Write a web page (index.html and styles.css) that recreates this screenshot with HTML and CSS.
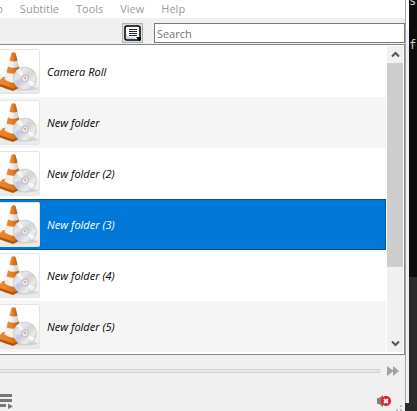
FILE: index.html
```html
<!DOCTYPE html>
<html lang="en">
<head>
<meta charset="utf-8">
<title>Playlist</title>
<link rel="stylesheet" href="styles.css">
</head>
<body>
<svg class="defs" aria-hidden="true">
  <defs>
    <linearGradient id="paper" x2="0" y2="1"><stop offset="0.4" stop-color="#fff"/><stop offset="1" stop-color="#e8e8e8"/></linearGradient>
    <linearGradient id="orange" x2="1" y2="0"><stop offset="0" stop-color="#e98a3a"/><stop offset="0.4" stop-color="#e8801f"/><stop offset="1" stop-color="#b4560e"/></linearGradient>
    <linearGradient id="white" x2="1" y2="0"><stop offset="0" stop-color="#ececec"/><stop offset="0.4" stop-color="#f4f4f4"/><stop offset="1" stop-color="#b4b4b4"/></linearGradient>
    <linearGradient id="disc" x2="1" y2="1"><stop offset="0" stop-color="#bfc1ca"/><stop offset="0.3" stop-color="#e6e8e8"/><stop offset="0.5" stop-color="#cfcee0"/><stop offset="0.7" stop-color="#ecece8"/><stop offset="1" stop-color="#b4b8bc"/></linearGradient>
    <symbol id="cover" viewBox="0 0 45 45">
      <rect x="0.5" y="0.5" width="44" height="44" rx="1" fill="url(#paper)" stroke="#e4e4e4"/>
      <ellipse cx="26" cy="39.500" rx="17" ry="2" fill="#d4d4d4"/>
      <path d="M8 28 27 27 31 34 18 41 2 34Z" fill="url(#orange)"/>
      <path d="M2 34 18 39.500 31 33 31 35 18 42 2 36.500Z" fill="#b4520b"/>
      <path d="M16.500 4Q18.500 2.500 20.500 4L27 31Q18 37 9.500 30Z" fill="url(#white)"/>
      <path d="M16.500 4Q18.500 2.500 20.500 4L22.500 11.500Q18.500 13.500 14.500 11.500Z" fill="url(#orange)"/>
      <path d="M13 17.500Q18.500 20 24 17.500L25.500 23.500Q18.500 26 11.500 23.500Z" fill="url(#orange)"/>
      <circle cx="30" cy="29.500" r="11.500" fill="url(#disc)" stroke="#c0c0c0" stroke-width=".6"/>
      <path d="M30 29.500 21 22 25 19ZM30 29.500 40 34 37 38Z" fill="#fff" opacity=".7"/>
      <path d="M30 29.500 37 21 40 26Z" fill="#e6ddb2" opacity=".6"/>
      <path d="M30 29.500 22 36 20 31Z" fill="#bfc2e6" opacity=".6"/>
      <circle cx="30" cy="29.500" r="4" fill="#c0c6dc"/>
      <circle cx="30" cy="29.500" r="2.500" fill="#f3eee8"/>
      <path d="M28 28 31 28 31 31Z" fill="#e9a45c"/>
    </symbol>
  </defs>
</svg>
<div class="desktop">
  <main class="player">
    <nav class="menu">
      <button class="menu-item" type="button">Video</button>
      <button class="menu-item" type="button">Subtitle</button>
      <button class="menu-item" type="button">Tools</button>
      <button class="menu-item" type="button">View</button>
      <button class="menu-item" type="button">Help</button>
    </nav>
    <div class="toolbar">
      <button class="view-button" type="button" aria-label="Change view">
        <svg width="17" height="16" viewBox="0 0 17 16">
          <rect x="1" y="1" width="15" height="14" rx="2" fill="#fff" stroke="#000" stroke-width="1.500"/>
          <path d="M2 8 2 13 3 14 12 14 10 12 4 12Z" fill="#bcd9f8"/>
          <path d="M5 4.500h8M5 6.500h8M5 8.500h8M5 10.500h8" stroke="#222"/>
          <path d="M12 12h5v3l-1 1h-1Z" fill="#000"/>
        </svg>
      </button>
      <input class="search" type="text" placeholder="Search" aria-label="Search">
    </div>
    <section class="playlist">
      <ul class="rows">
        <li class="row"><svg class="cover"><use href="#cover"/></svg><span>Camera Roll</span></li>
        <li class="row"><svg class="cover"><use href="#cover"/></svg><span>New folder</span></li>
        <li class="row"><svg class="cover"><use href="#cover"/></svg><span>New folder (2)</span></li>
        <li class="row selected"><svg class="cover"><use href="#cover"/></svg><span>New folder (3)</span></li>
        <li class="row"><svg class="cover"><use href="#cover"/></svg><span>New folder (4)</span></li>
        <li class="row"><svg class="cover"><use href="#cover"/></svg><span>New folder (5)</span></li>
      </ul>
      <div class="scrollbar">
        <button class="arrow" type="button" aria-label="Scroll up"><svg width="9" height="7" viewBox="0 0 9 7"><path d="M1 5.500 4.500 2 8 5.500" fill="none" stroke="#555" stroke-width="2"/></svg></button>
        <div class="track"><div class="thumb"></div></div>
        <button class="arrow" type="button" aria-label="Scroll down"><svg width="9" height="7" viewBox="0 0 9 7"><path d="M1 1.500 4.500 5 8 1.500" fill="none" stroke="#555" stroke-width="2"/></svg></button>
      </div>
    </section>
    <div class="seek">
      <input class="slider" type="range" value="0" aria-label="Position" disabled>
      <button class="plain" type="button" aria-label="Faster"><svg width="12" height="10" viewBox="0 0 12 10"><path d="M0 0 6 4.500V0L12 5 6 10V5.500L0 10Z" fill="#a0a0a0"/></svg></button>
    </div>
    <div class="controls">
      <button class="plain" type="button" aria-label="Toggle playlist"><svg width="13" height="15" viewBox="0 0 13 15"><path d="M0 1.500h12M0 6.500h12M0 11.500h6" stroke="#777" stroke-width="3"/><path d="M8 9.500 13 12.500 8 15Z" fill="#777"/></svg></button>
      <button class="plain" type="button" aria-label="Unmute"><svg width="14" height="12" viewBox="0 0 14 12"><path d="M0 3h2l4-3v12l-4-3H0Z" fill="#808080"/><circle cx="9" cy="6" r="5" fill="#ec1620"/><path d="M7 4l4 4M11 4l-4 4" stroke="#fff" stroke-width="2"/></svg></button>
      <svg class="grip" width="6" height="6" viewBox="0 0 6 6"><path d="M4 0h2v2H4ZM0 4h2v2H0ZM4 4h2v2H4Z" fill="#bdbdbd"/></svg>
    </div>
  </main>
  <div class="edge"></div>
  <aside class="terminal"><span class="glyph top">s</span><span class="glyph">f</span></aside>
</div>
</body>
</html>
```

FILE: styles.css
```css
* { box-sizing: border-box; }

body {
  margin: 0;
  background: #2b2b2b;
  font: 11px/16px "Open Sans", "Noto Sans", sans-serif;
  overflow: hidden;
}

button {
  margin: 0;
  padding: 0;
  border: 0;
  background: none;
  font: inherit;
}

svg { display: block; }

.defs {
  position: absolute;
  width: 0;
  height: 0;
}

.desktop {
  display: grid;
  grid-template-columns: 1fr 4px 8px;
  height: 100vh;
}

.player {
  display: flex;
  flex-direction: column;
  min-width: 0;
  background: #f0f0f0;
}

.menu {
  display: flex;
  gap: 17px;
  height: 18px;
  background: #fff;
}

.menu-item {
  color: #999;
  line-height: 18px;
}

.menu-item:first-child {
  margin-left: -26px;
}

.toolbar {
  display: flex;
  justify-content: flex-end;
  gap: 11px;
  height: 26px;
  padding-top: 5px;
}

.view-button {
  display: grid;
  place-items: center;
  width: 21px;
  height: 20px;
  border: 1px solid #b2b2b2;
  background: #dedede;
}

.search {
  width: 62%;
  height: 20px;
  padding: 0 2px;
  border: 1px solid #7a7a7a;
  border-radius: 0;
  background: #fff;
  font: inherit;
}

.search::placeholder {
  color: #757575;
  opacity: 1;
}

.playlist {
  display: flex;
  gap: 1px;
  padding: 1px 1px 2px 0;
  border: 1px solid #828790;
  border-left: 0;
  background: #fff;
}

.rows {
  flex: 1;
  min-width: 0;
  margin: 0;
  padding: 0;
  list-style: none;
}

.row {
  display: flex;
  align-items: center;
  gap: 7px;
  height: 51px;
  border: 1px solid transparent;
  border-width: 1px 1px 1px 0;
  color: #000;
  font-style: italic;
}

.row:nth-child(even) {
  background: #f5f5f5;
}

.row.selected {
  border-color: #00549a;
  background: #0078d7;
  color: #fff;
}

.cover {
  flex: none;
  width: 45px;
  height: 45px;
  margin-left: -5px;
}

.scrollbar {
  display: flex;
  flex-direction: column;
  width: 16px;
  background: #f0f0f0;
}

.arrow {
  display: grid;
  place-items: center;
  height: 17px;
}

.track { flex: 1; }

.thumb {
  height: 75%;
  background: #cdcdcd;
}

.seek {
  display: flex;
  align-items: center;
  gap: 7px;
  height: 32px;
  padding-right: 6px;
}

.slider {
  flex: 1;
  min-width: 0;
  height: 4px;
  margin: 0;
  border: 1px solid #d2d2d2;
  border-left: 0;
  background: #e4e9e7;
  appearance: none;
}

.slider::-webkit-slider-thumb {
  width: 0;
  height: 0;
  appearance: none;
}

.controls {
  display: flex;
  flex: 1;
  align-items: center;
  padding: 4px 3px 0 0;
}

.controls .plain:first-child { margin-right: auto; }

.grip {
  align-self: flex-end;
  margin-left: 5px;
}

.edge {
  height: calc(100% - 8px);
  border-left: 1px solid #a2a5aa;
  background: linear-gradient(#fff 30px, #f0f0f0 30px);
}

.terminal {
  overflow: hidden;
  background: linear-gradient(#0c0c0c 277px, #2b2b2b 277px);
  color: #ccc;
  font: 12px/16px "DejaVu Sans Mono", monospace;
}

.glyph {
  display: block;
  margin-top: 28px;
}

.glyph.top {
  margin-top: -7px;
}
```
